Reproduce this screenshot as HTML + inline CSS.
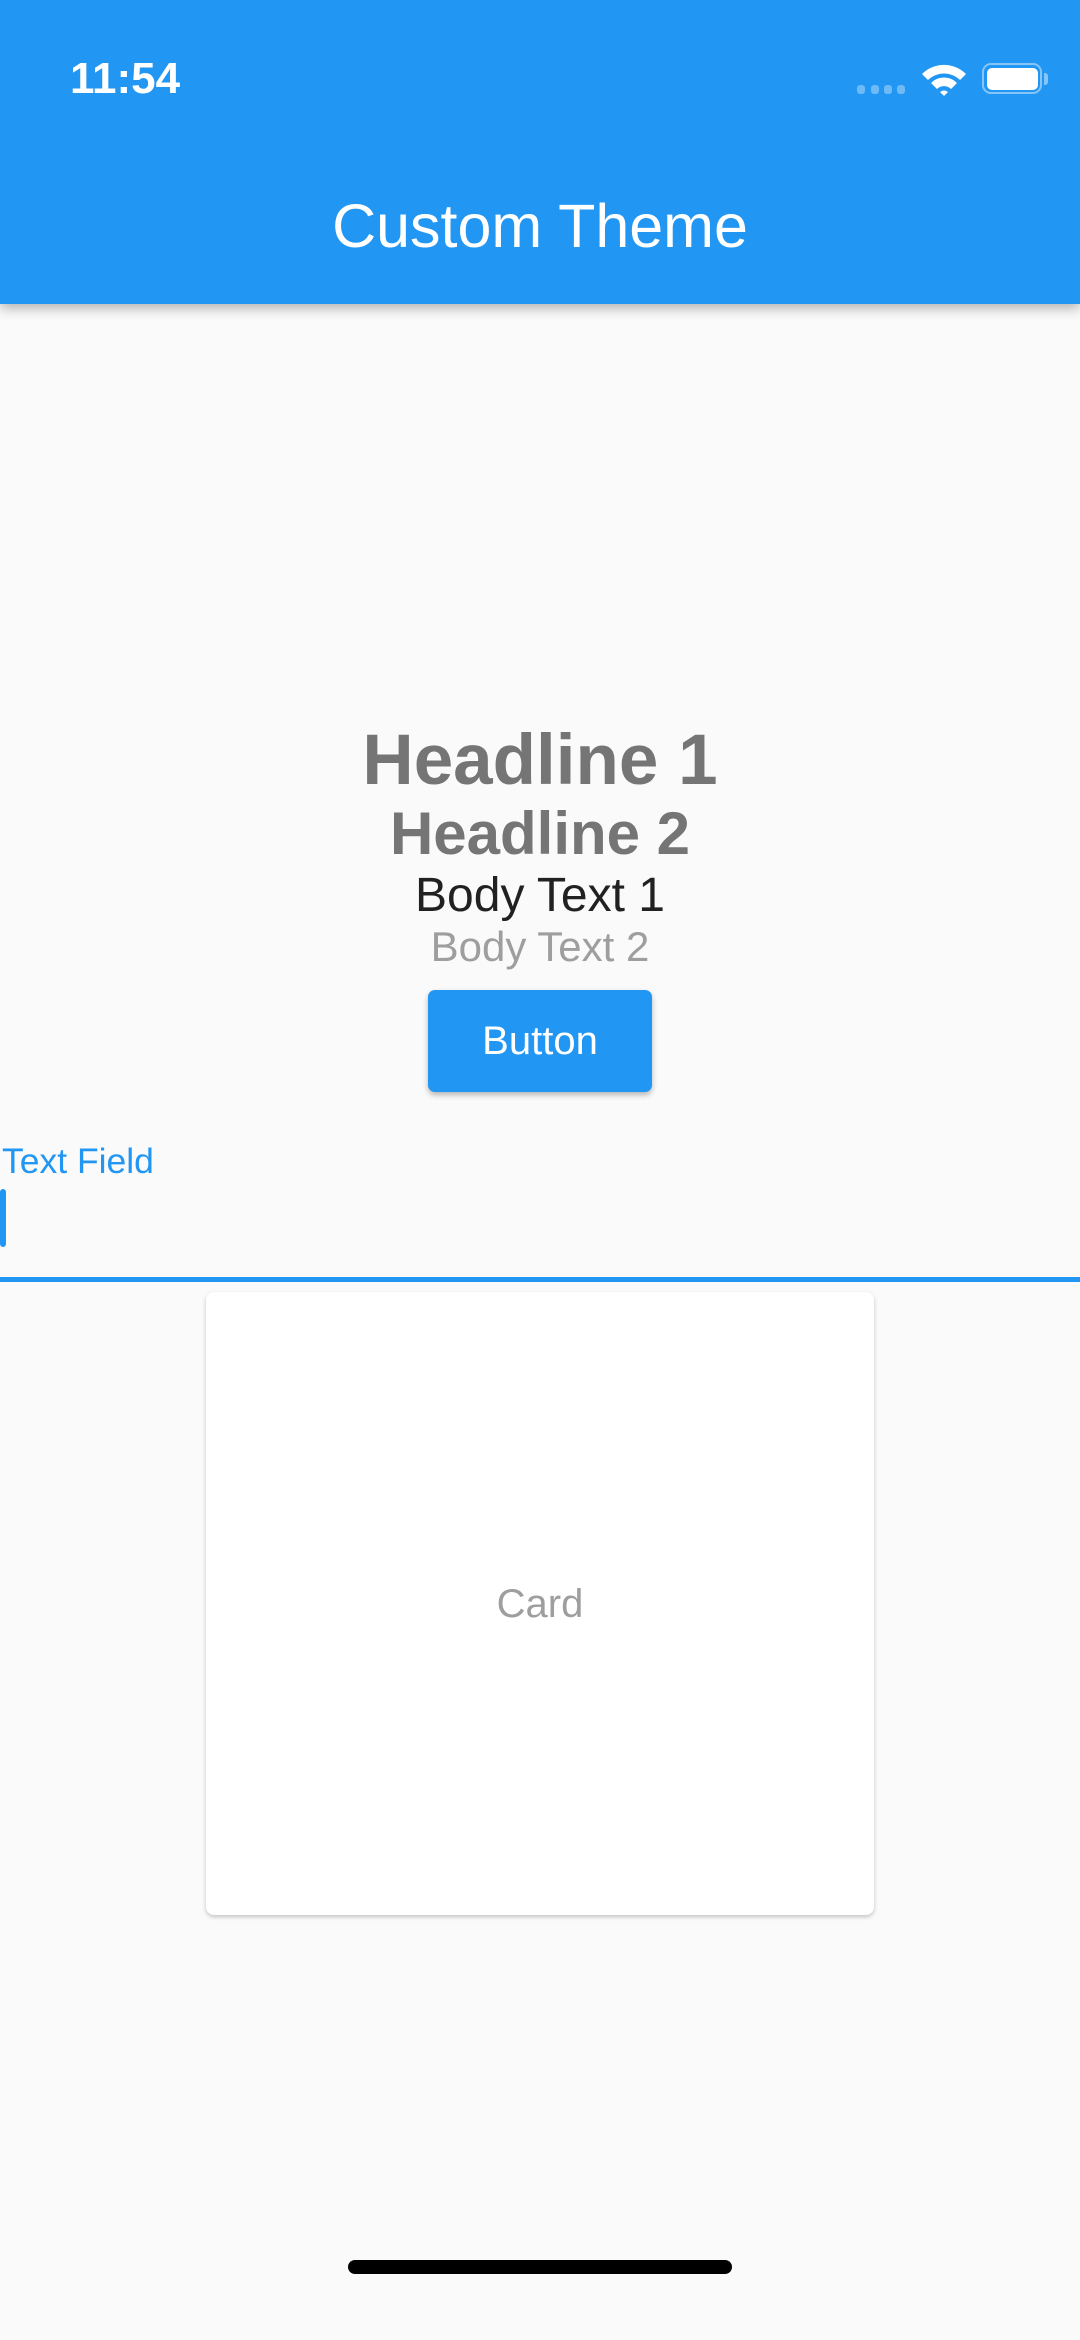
<!DOCTYPE html>
<html><head><meta charset="utf-8">
<style>
html,body{margin:0;padding:0;}
body{width:1080px;height:2340px;background:#fafafa;position:relative;overflow:hidden;font-family:"Liberation Sans",sans-serif;}
.abs{position:absolute;}
.bar{left:0;top:0;width:1080px;height:304px;background:#2196f3;box-shadow:0 4px 12px rgba(0,0,0,0.3);}
.c{left:0;width:1080px;text-align:center;white-space:nowrap;}
</style></head><body>
<div class="abs bar"></div>
<div class="abs" style="left:70px;top:53px;font-size:44px;font-weight:bold;color:#fff;line-height:52px;">11:54</div>
<div class="abs" style="left:857px;top:85px;width:8px;height:9px;border-radius:3px;background:rgba(255,255,255,0.35)"></div>
<div class="abs" style="left:871px;top:85px;width:8px;height:9px;border-radius:3px;background:rgba(255,255,255,0.35)"></div>
<div class="abs" style="left:884px;top:85px;width:8px;height:9px;border-radius:3px;background:rgba(255,255,255,0.35)"></div>
<div class="abs" style="left:897px;top:85px;width:8px;height:9px;border-radius:3px;background:rgba(255,255,255,0.35)"></div>
<svg class="abs" style="left:920px;top:62px" width="48" height="34" viewBox="0 0 48 34">
<path d="M2 12 A31 31 0 0 1 46 12 L40 18 A23 23 0 0 0 8 18 Z" fill="#fff"/>
<path d="M11 21 A18 18 0 0 1 37 21 L31 27 A10 10 0 0 0 17 27 Z" fill="#fff"/>
<path d="M20 30 A6 6 0 0 1 28 30 L24 34 Z" fill="#fff"/>
</svg>
<div class="abs" style="left:982px;top:63px;width:56px;height:27px;border:2.5px solid rgba(255,255,255,0.45);border-radius:9px;"></div>
<div class="abs" style="left:987px;top:68px;width:51px;height:22px;background:#fff;border-radius:5px;"></div>
<div class="abs" style="left:1044px;top:73px;width:4px;height:12px;background:rgba(255,255,255,0.45);border-radius:0 3px 3px 0;"></div>
<div class="abs c" style="top:190px;font-size:61px;color:#fff;line-height:72px;">Custom Theme</div>

<div class="abs c" style="top:719px;font-size:71px;font-weight:bold;color:#757575;line-height:84px;">Headline 1</div>
<div class="abs c" style="top:799px;font-size:60px;font-weight:bold;color:#757575;line-height:70px;">Headline 2</div>
<div class="abs c" style="top:868px;font-size:48px;color:#212121;line-height:56px;">Body Text 1</div>
<div class="abs c" style="top:923px;font-size:42px;color:#9e9e9e;line-height:48px;">Body Text 2</div>
<div class="abs" style="left:428px;top:990px;width:224px;height:102px;background:#2196f3;border-radius:7px;box-shadow:0 3px 6px rgba(0,0,0,0.28);color:#fff;font-size:40px;line-height:102px;text-align:center;">Button</div>

<div class="abs" style="left:2px;top:1141px;font-size:35.5px;color:#2196f3;line-height:40px;">Text Field</div>
<div class="abs" style="left:0;top:1189px;width:6px;height:58px;background:#2196f3;border-radius:3px;"></div>
<div class="abs" style="left:0;top:1277px;width:1080px;height:5px;background:#2196f3;"></div>

<div class="abs" style="left:206px;top:1292px;width:668px;height:623px;background:#fff;border-radius:8px;box-shadow:0 2px 4px rgba(0,0,0,0.22);"></div>
<div class="abs c" style="top:1580px;font-size:40px;color:#9e9e9e;line-height:48px;">Card</div>

<div class="abs" style="left:348px;top:2260px;width:384px;height:14px;background:#000;border-radius:7px;"></div>
</body></html>
